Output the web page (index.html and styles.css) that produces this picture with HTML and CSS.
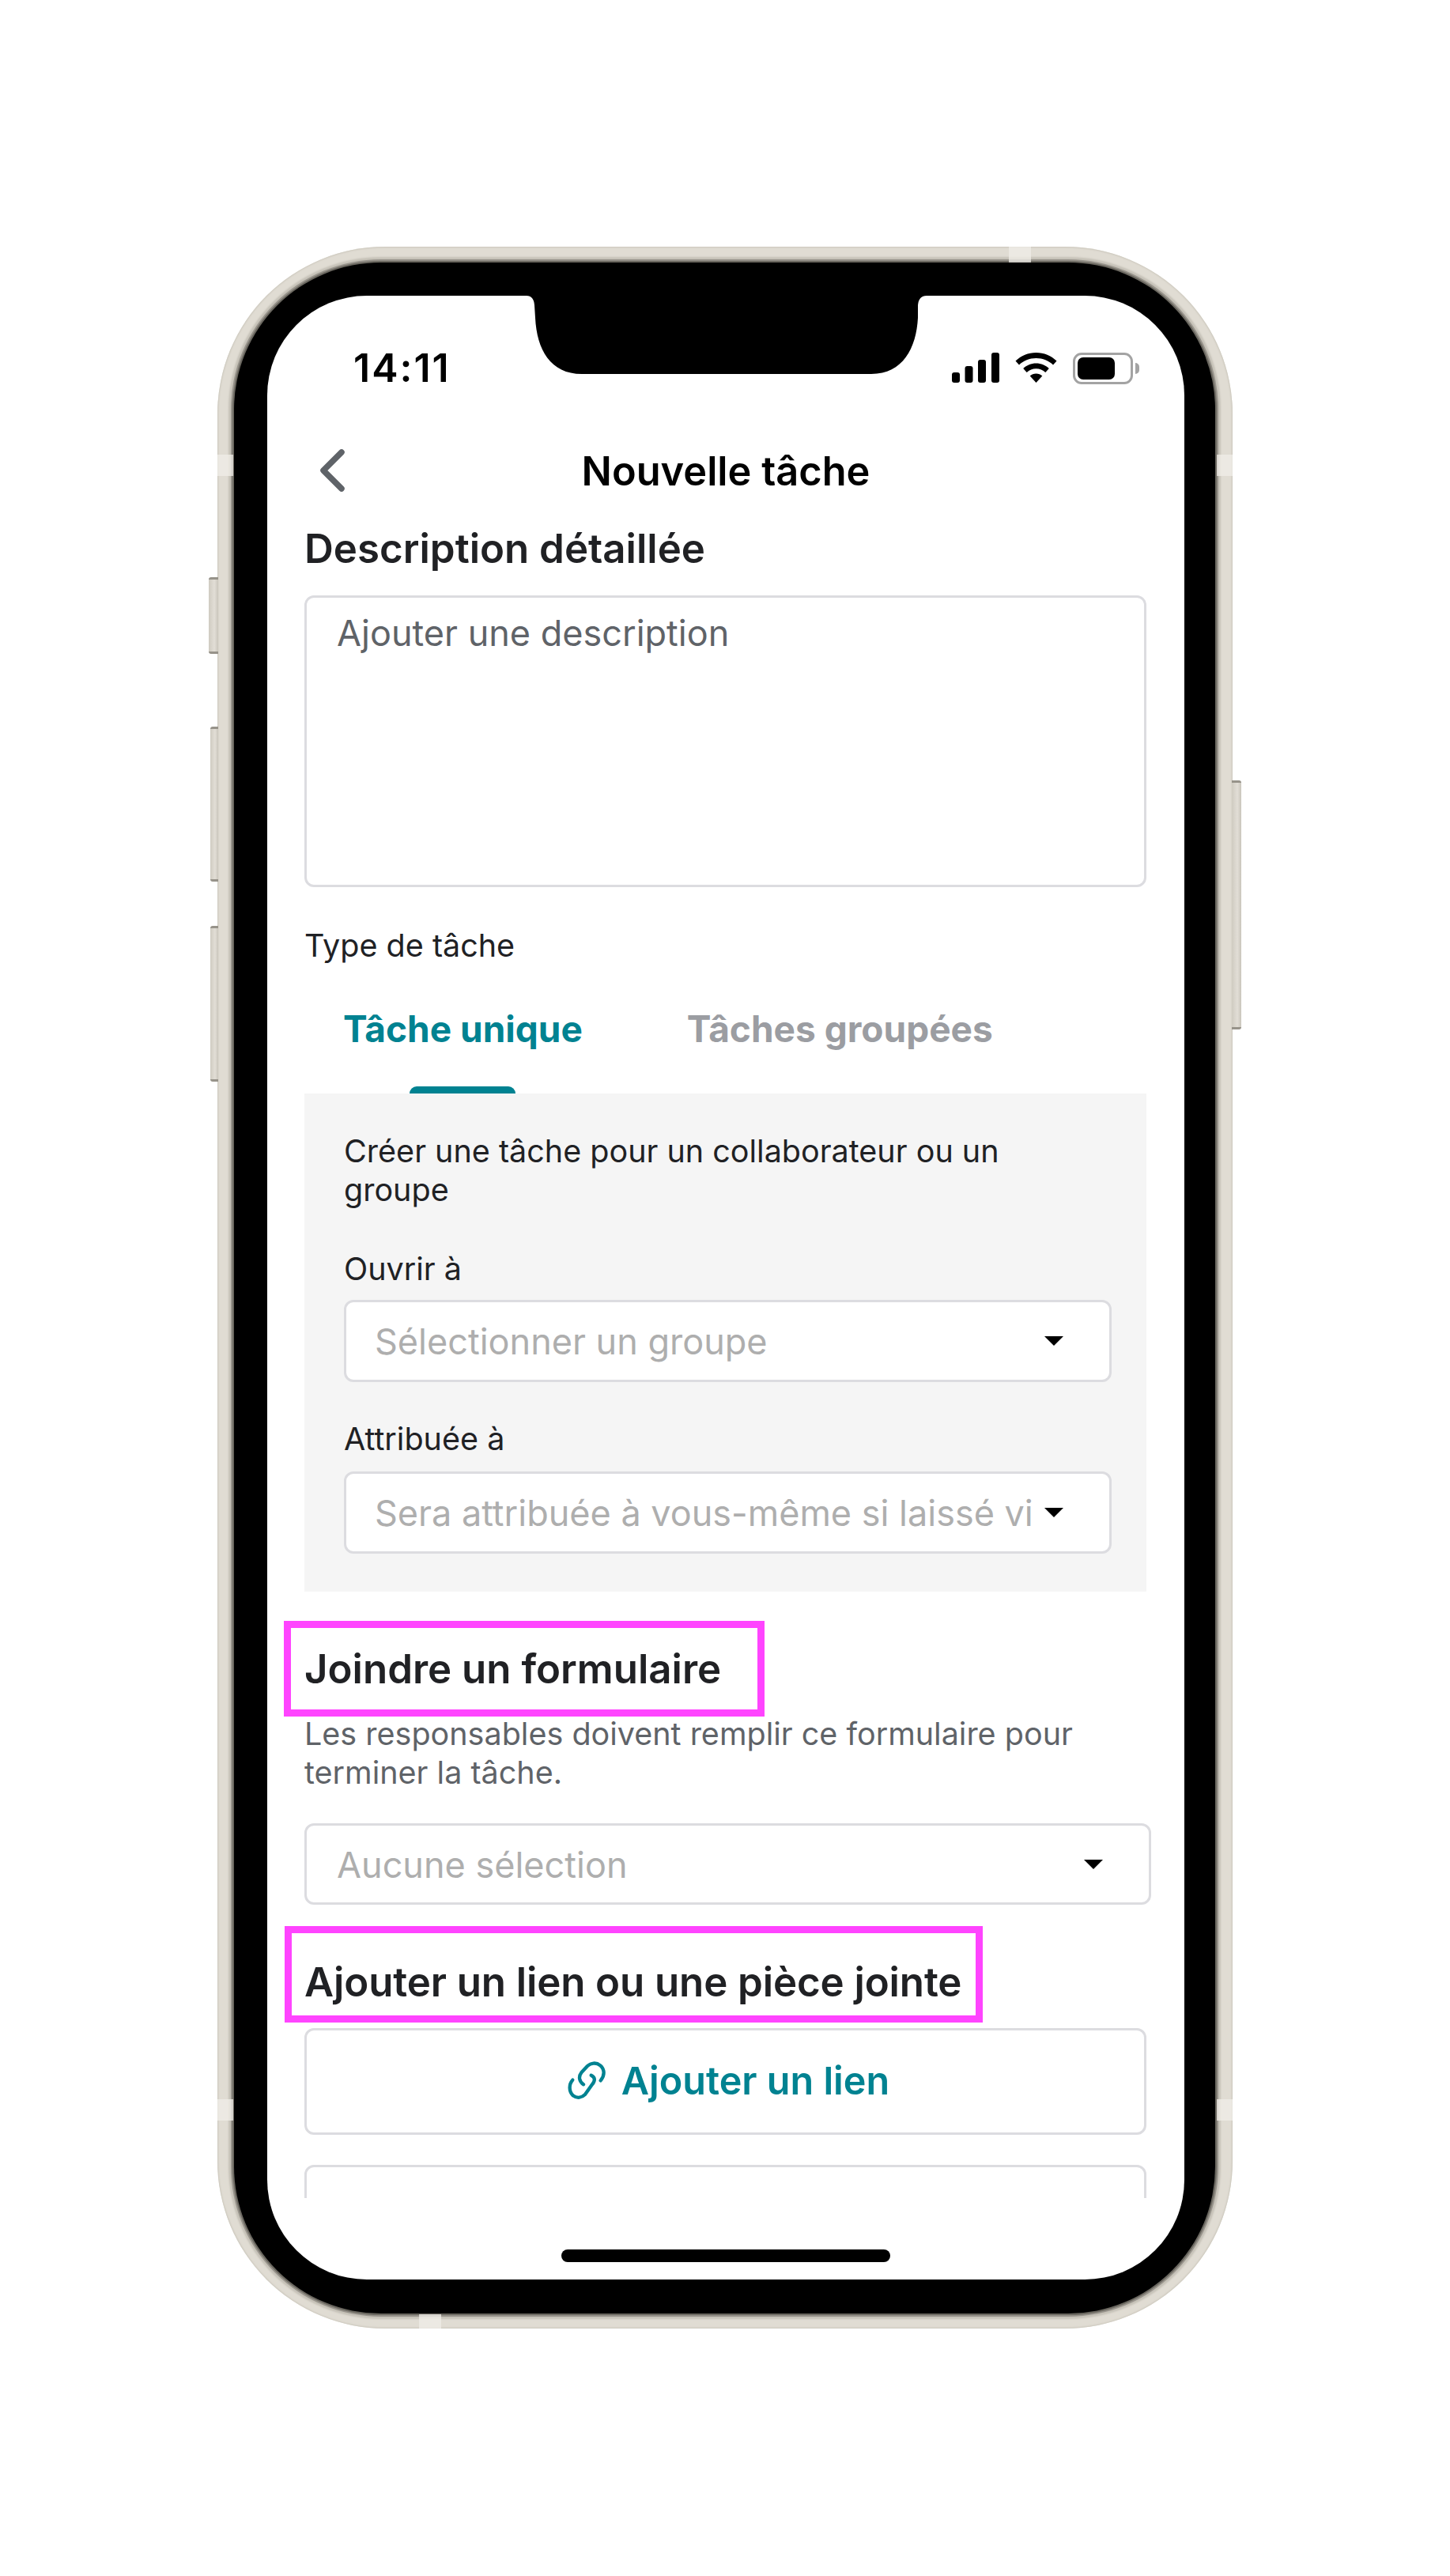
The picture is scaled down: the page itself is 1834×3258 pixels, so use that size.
FILE: index.html
```html
<!DOCTYPE html>
<html lang="fr">
<head>
    <meta charset="UTF-8">
    <meta name="viewport" content="width=device-width, initial-scale=1.0">
    <title>Nouvelle tâche</title>
    <link rel="stylesheet" href="styles.css">
</head>
<body>
    <div class="phone">
        <span class="side-btn mute"></span>
        <span class="side-btn vol-up"></span>
        <span class="side-btn vol-down"></span>
        <span class="side-btn power"></span>

        <div class="frame">
            <div class="screen">
                <svg class="notch" viewBox="0 0 506 100" width="506" height="100">
                    <path d="M0 0 Q9 0 10 12 L11 28 C13 68 30 99 70 99 L436 99 C476 99 493 66 495 28 L495 12 Q496 0 506 0 Z" fill="#000"/>
                </svg>

                <div class="status">
                    <span class="time">14:11</span>
                    <div class="status-icons">
                        <svg width="60" height="38" viewBox="0 0 60 38" fill="#000">
                            <rect x="0" y="25" width="10" height="13" rx="3"/>
                            <rect x="16.5" y="17" width="10" height="21" rx="3"/>
                            <rect x="33" y="9" width="10" height="29" rx="3"/>
                            <rect x="50" y="0" width="10" height="38" rx="3"/>
                        </svg>
                        <svg class="wifi" width="53" height="38" viewBox="0 0 53 38" fill="#000">
                            <path d="M26.5 0C36.5 0 45.5 3.900 52.500 10.500L48 15.500C42.500 10.100 34.900 7 26.500 7S10.500 10.100 5 15.500L.5 10.500C7.500 3.900 16.500 0 26.500 0Z"/>
                            <path d="M26.500 13.500C32.800 13.500 38.500 16 42.800 20L38.300 25C35.200 22.100 31 20.300 26.500 20.300S17.800 22.100 14.700 25L10.200 20C14.500 16 20.200 13.500 26.500 13.500Z"/>
                            <path d="M26.500 26.500C29.500 26.500 32.200 27.600 34.300 29.500L26.500 38L18.700 29.500C20.800 27.600 23.500 26.500 26.500 26.500Z"/>
                        </svg>
                        <div class="battery"><span class="battery-fill"></span></div>
                    </div>
                </div>

                <div class="nav">
                    <svg class="back" width="33" height="56" viewBox="0 0 33 56">
                        <path d="M28 5 L5 28 L28 51" fill="none" stroke="#5f6368" stroke-width="7.500" stroke-linecap="round" stroke-linejoin="round"/>
                    </svg>
                    <h1>Nouvelle tâche</h1>
                </div>

                <div class="scroll">
                    <h2>Description détaillée</h2>
                    <div class="textarea">Ajouter une description</div>

                    <div class="type-label">Type de tâche</div>
                    <div class="tabs">
                        <div class="tab active">Tâche unique<span class="tab-bar"></span></div>
                        <div class="tab">Tâches groupées</div>
                    </div>

                    <div class="panel">
                        <p class="panel-text">Créer une tâche pour un collaborateur ou un groupe</p>
                        <div class="field-label first">Ouvrir à</div>
                        <div class="select">
                            <span class="select-text">Sélectionner un groupe</span>
                            <span class="caret"></span>
                        </div>
                        <div class="field-label second">Attribuée à</div>
                        <div class="select">
                            <span class="select-text">Sera attribuée à vous-même si laissé vide</span>
                            <span class="caret"></span>
                        </div>
                    </div>

                    <h2 class="form-title">Joindre un formulaire<span class="mark mark-form"></span></h2>
                    <p class="help">Les responsables doivent remplir ce formulaire pour terminer la tâche.</p>
                    <div class="select select-wide">
                        <span class="select-text">Aucune sélection</span>
                        <span class="caret"></span>
                    </div>

                    <h2 class="link-title">Ajouter un lien ou une pièce jointe<span class="mark mark-link"></span></h2>
                    <div class="link-btn">
                        <svg class="link-icon" width="48" height="48" viewBox="52 42 144 144" fill="none" stroke="#008291" stroke-width="13" stroke-linecap="round" stroke-linejoin="round">
                            <path d="M177 115 C194 95 192 72 176 58 C160 45 140 48 127 60 L104 85 C92 100 96 120 112 130"/>
                            <path d="M71 113 C56 130 56 155 72 172 C88 184 106 180 118 168 L145 130 C158 115 156 102 141 95"/>
                        </svg>
                        <span>Ajouter un lien</span>
                    </div>
                    <div class="attach-btn"></div>
                </div>

                <div class="home-bar"></div>
            </div>
        </div>

        <span class="band band-top"></span>
        <span class="band band-bottom"></span>
        <span class="band band-left-1"></span>
        <span class="band band-left-2"></span>
        <span class="band band-right-1"></span>
        <span class="band band-right-2"></span>
    </div>
</body>
</html>
```

FILE: styles.css
```css
* {
    box-sizing: border-box;
}
body {
    margin: 0;
    height: 3258px;
    background: #fff;
    font-family: Inter, "Noto Sans", sans-serif;
    color: #202124;
    overflow: hidden;
}
h1, h2, p {
    margin: 0;
}

/* device */
.phone {
    position: relative;
    width: 1284px;
    height: 2633px;
    margin: 312px 0 0 275px;
    padding: 20px 22px 19px 21px;
    border-radius: 212px;
    background: #e0dcd3;
    box-shadow: inset 0 0 2px 1px #cbc7bc;
}
.frame {
    height: 100%;
    padding: 42px 39px 43px 42px;
    border-radius: 186px;
    background: #000;
    box-shadow: 0 0 0 2px #6b6860, 0 0 0 4px #96928a, 0 0 2px 7px #c6c2b8;
}
.screen {
    position: relative;
    height: 100%;
    border-radius: 126px;
    background: #fff;
    overflow: hidden;
}
.notch {
    position: absolute;
    top: 0;
    left: 328px;
}
.band {
    position: absolute;
    background: rgba(240, 238, 232, 0.75);
}
.band-top {
    top: 0;
    left: 1001px;
    width: 28px;
    height: 20px;
}
.band-bottom {
    bottom: 0;
    left: 255px;
    width: 28px;
    height: 18px;
}
.band-left-1, .band-left-2, .band-right-1, .band-right-2 {
    width: 20px;
    height: 27px;
}
.band-left-1 {
    top: 263px;
    left: 0;
}
.band-left-2 {
    top: 2343px;
    left: 0;
}
.band-right-1 {
    top: 263px;
    right: 0;
}
.band-right-2 {
    top: 2343px;
    right: 0;
}
.side-btn {
    position: absolute;
    background: linear-gradient(to right, #cfcbc1, #e2ded6 60%, #c9c5bb);
    border-top: 3px solid #97938a;
    border-bottom: 3px solid #97938a;
    border-radius: 3px 0 0 3px;
}
.mute {
    top: 418px;
    left: -11px;
    width: 12px;
    height: 97px;
}
.vol-up {
    top: 607px;
    left: -9px;
    width: 10px;
    height: 196px;
}
.vol-down {
    top: 859px;
    left: -9px;
    width: 10px;
    height: 197px;
}
.power {
    top: 675px;
    right: -11px;
    width: 12px;
    height: 315px;
    border-radius: 0 3px 3px 0;
}

/* status bar */
.status {
    display: flex;
    justify-content: space-between;
    height: 156px;
    padding: 72px 65px 0 109px;
}
.time {
    font-size: 50px;
    font-weight: 600;
    letter-spacing: 2px;
    line-height: 38px;
    color: #000;
}
.status-icons {
    display: flex;
    gap: 20px;
    height: 40px;
}
.wifi {
    flex: none;
}
.battery {
    position: relative;
    width: 76px;
    height: 40px;
    padding: 3px;
    border: 3px solid #a3a3a3;
    border-radius: 11px;
}
.battery::after {
    content: "";
    position: absolute;
    top: 10px;
    right: -11px;
    width: 5px;
    height: 14px;
    background: #a3a3a3;
    border-radius: 0 5px 5px 0;
}
.battery-fill {
    display: block;
    width: 47px;
    height: 100%;
    background: #000;
    border-radius: 7px;
}

/* nav */
.nav {
    position: relative;
    height: 134px;
    padding-top: 36px;
    text-align: center;
}
.nav h1 {
    font-size: 50.5px;
    font-weight: 600;
    line-height: 60px;
    color: #000;
}
.back {
    position: absolute;
    top: 37px;
    left: 66px;
}

/* content */
.scroll {
    height: 2116px;
    padding: 0 48px 0 47px;
    overflow: hidden;
}
h2 {
    position: relative;
    font-size: 51px;
    font-weight: 600;
    line-height: 60px;
}
.textarea {
    height: 369px;
    margin-top: 29px;
    padding: 20px 38px;
    border: 3px solid #dcdce0;
    border-radius: 12px;
    font-size: 45px;
    line-height: 50px;
    color: #5f6368;
}
.type-label {
    margin-top: 50px;
    font-size: 39.5px;
    line-height: 48px;
}
.tabs {
    display: flex;
    gap: 132px;
    height: 163px;
    padding-left: 49px;
}
.tab {
    display: flex;
    flex-direction: column;
    align-items: center;
    padding-top: 51px;
    font-size: 46px;
    font-weight: 700;
    line-height: 60px;
    color: #9b9da2;
}
.tab.active {
    color: #008291;
}
.tab-bar {
    width: 134px;
    height: 9px;
    margin-top: auto;
    background: #008291;
    border-radius: 9px 9px 0 0;
}
.panel {
    height: 630px;
    padding: 49px 44px 0 50px;
    background: #f5f5f5;
    font-size: 39.5px;
    line-height: 48px;
}
.panel-text {
    line-height: 49px;
}
.field-label.first {
    margin-top: 51px;
    margin-bottom: 15px;
}
.field-label.second {
    margin-top: 48px;
    margin-bottom: 17px;
}
.select {
    display: flex;
    align-items: center;
    height: 104px;
    padding: 0 58px 0 36px;
    background: #fff;
    border: 3px solid #dcdce0;
    border-radius: 12px;
    font-size: 45px;
    color: #aeaeae;
}
.select-text {
    flex: 1;
    min-width: 0;
    margin-right: 14px;
    padding-top: 2px;
    line-height: 62px;
    overflow: hidden;
    white-space: nowrap;
}
.caret {
    flex: none;
    width: 0;
    height: 0;
    border-top: 12px solid #000;
    border-left: 12px solid transparent;
    border-right: 12px solid transparent;
}
.form-title {
    margin-top: 68px;
}
.help {
    margin-top: 28px;
    font-size: 39.5px;
    line-height: 49px;
    color: #5f6368;
}
.select-wide {
    width: 1071px;
    height: 103px;
    margin-top: 39px;
    padding-left: 38px;
}
.link-title {
    margin-top: 68px;
    letter-spacing: -0.1px;
}
.mark {
    position: absolute;
    border: 9px solid #ff44ff;
}
.mark-form {
    top: -31px;
    left: -26px;
    width: 608px;
    height: 121px;
}
.mark-link {
    top: -41px;
    left: -25px;
    width: 883px;
    height: 122px;
}
.link-btn {
    display: flex;
    align-items: center;
    justify-content: center;
    gap: 20px;
    height: 135px;
    margin-top: 28px;
    padding: 0 0 3px 8px;
    border: 3px solid #dcdce0;
    border-radius: 12px;
    font-size: 48.5px;
    font-weight: 600;
    color: #008291;
}
.link-icon {
    overflow: visible;
}
.attach-btn {
    height: 135px;
    margin-top: 38px;
    border: 3px solid #dcdce0;
    border-radius: 12px;
}
.home-bar {
    width: 416px;
    height: 16px;
    margin: 65px auto 0;
    background: #000;
    border-radius: 8px;
}
```
